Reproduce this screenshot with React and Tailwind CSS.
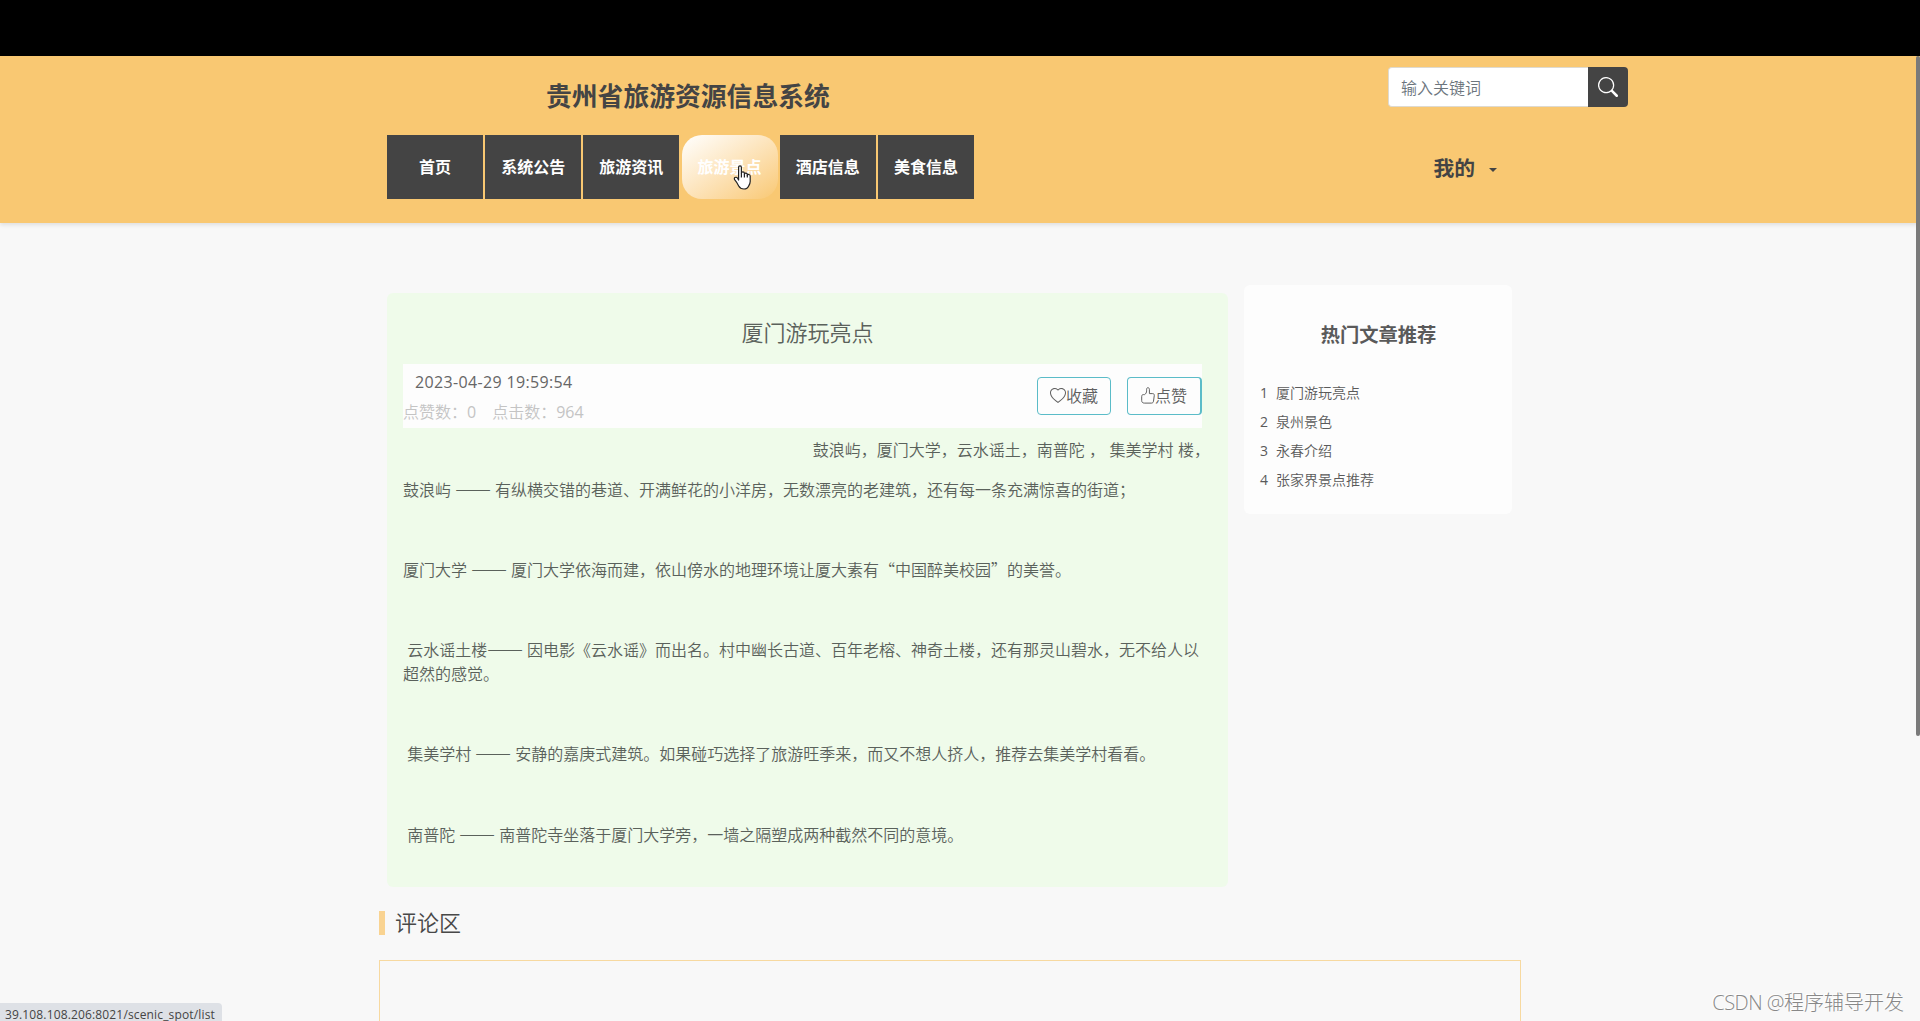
import React, { useState } from 'react';
import { BsSearch, BsHeart } from 'react-icons/bs';

const navItems = ['首页', '系统公告', '旅游资讯', '旅游景点', '酒店信息', '美食信息'];

const hotArticles = ['厦门游玩亮点', '泉州景色', '永春介绍', '张家界景点推荐'];

const Dash = () => <span className="font-['Noto_Sans_CJK_SC',sans-serif] text-[21.5px] leading-[0] font-light">——</span>;

// full-width quotation marks
const Quoted = ({ children }) => (
  <span className="font-['Noto_Sans_CJK_SC',sans-serif] leading-[0]">“{children}”</span>
);

const ThumbIcon = () => (
  <svg width="14" height="17" viewBox="0 0 14 17" fill="none" stroke="currentColor" strokeWidth="1" strokeLinejoin="round">
    <path d="M2.300 7.600h1.300C5 6.800 5.600 5.300 5.600 3.800V2.300C5.600 1.300 6.100.7 6.900.7S8.400 1.300 8.400 2.300v4.300h3.300c1.100 0 1.700.8 1.600 1.700l-.8 5.900c-.2 1.200-.9 1.900-2 1.900H3.300C1.600 16.100.7 15.100.7 13.600V9.700C.7 8.300 1.200 7.600 2.300 7.600z" />
  </svg>
);

const HandCursor = () => (
  <svg className="absolute left-[51px] top-[30px]" width="19" height="25" viewBox="0 0 19 25" fill="#fff" stroke="#222" strokeWidth="1.2" strokeLinejoin="round">
    <path d="M5.600 15V2.400C5.600.3 8.400.3 8.400 2.400V8c.2-1.600 2.900-1.500 3 .2v.8c.3-1.400 2.800-1.200 2.900.4v.8c.4-1.200 2.800-1 2.900.8v5.500c0 1.800-.6 2.800-1.400 4.200-.8 2-2.200 3.300-4.800 3.300-2.700 0-4.200-.9-5.300-3-1-2-1.800-3.600-3.700-5.800-.8-1-.9-2-.1-2.600.9-.7 2-.3 2.700.6z" />
    <path d="M8.400 8v4.500M11.400 9v3.500M14.300 10v2.500" />
  </svg>
);

const Header = () => {
  const [keyword, setKeyword] = useState('');

  return (
    <header className="relative h-[167px] bg-[#f9c872] shadow-[0_2px_4px_rgba(0,0,0,0.1)]">
      <div className="flex justify-between pl-[546px] pr-[292px] pt-[11px]">
        <h1 className="pt-2.5 text-[25.8px] leading-[38px] font-bold text-[#444]">贵州省旅游资源信息系统</h1>
        <form className="flex h-10 w-[240px]" onSubmit={(e) => e.preventDefault()}>
          <input
            value={keyword}
            onChange={(e) => setKeyword(e.target.value)}
            placeholder="输入关键词"
            className="w-[200px] rounded-l border border-r-0 border-[#dedad0] bg-white px-3 pt-0.5 text-base placeholder:text-[#6c757d] focus:outline-none"
          />
          <button className="flex w-10 items-center justify-center rounded-r bg-[#444] text-white">
            <BsSearch size={20} />
          </button>
        </form>
      </div>
      <div className="mt-5 flex items-center justify-between pl-[387px] pr-[423px]">
        <nav className="flex gap-[2.2px]">
          {navItems.map((item) => (
            <a
              key={item}
              className={
                item === '旅游景点'
                  ? 'relative flex h-16 w-24 items-center justify-center rounded-[20px] bg-linear-to-br from-white to-[#f9c872] font-bold text-white'
                  : 'flex h-16 w-24 items-center justify-center bg-[#444] font-bold text-white'
              }
            >
              {item}
              {item === '旅游景点' && <HandCursor />}
            </a>
          ))}
        </nav>
        <div className="flex items-center gap-[14px] pt-[3px] text-[#444]">
          <span className="text-[20.8px] font-bold">我的</span>
          <span className="mt-0.5 border-x-4 border-t-4 border-x-transparent border-t-[#444]" />
        </div>
      </div>
    </header>
  );
};

const Article = () => (
  <article className="mt-2 h-[594px] w-[841px] rounded-md bg-[#effbea] pl-4 pr-[26px] pt-[23px] text-[#5a615b]">
    <h2 className="h-12 pl-2.5 text-center text-[22px] leading-8">厦门游玩亮点</h2>
    <div className="flex h-16 justify-between bg-[#fdfdfd]">
      <div>
        <p className="pl-3 pt-1.5 text-base leading-6 font-normal tracking-[0.35px] text-[#666]">2023-04-29 19:59:54</p>
        <p className="flex gap-4 pt-1.5 leading-6 text-[#c4c4c4]">
          <span>点赞数：<span className="font-normal">0</span></span>
          <span>点击数：<span className="font-normal">964</span></span>
        </p>
      </div>
      <div className="flex items-center gap-4 pb-px text-[#606060]">
        <button className="flex h-[38px] w-[74px] items-center justify-center rounded border border-[#5bbcc8]">
          <BsHeart size={16} />收藏
        </button>
        <button className="flex h-[38px] w-[75px] items-center justify-center rounded border border-r-2 border-[#5bbcc8]">
          <ThumbIcon />点赞
        </button>
      </div>
    </div>
    <div className="pt-2.5 leading-6 *:mb-4 *:h-6">
      <p className="-mr-2 text-right [word-spacing:0.3px]">鼓浪屿，厦门大学，云水谣土，南普陀 ， 集美学村 楼，</p>
      <p>鼓浪屿 <Dash /> 有纵横交错的巷道、开满鲜花的小洋房，无数漂亮的老建筑，还有每一条充满惊喜的街道；</p>
      <p />
      <p>厦门大学 <Dash /> 厦门大学依海而建，依山傍水的地理环境让厦大素有<Quoted>中国醉美校园</Quoted>的美誉。</p>
      <p />
      <p className="h-12!">&nbsp;云水谣土楼<Dash /> 因电影《云水谣》而出名。村中幽长古道、百年老榕、神奇土楼，还有那灵山碧水，无不给人以超然的感觉。</p>
      <p />
      <p>&nbsp;集美学村 <Dash /> 安静的嘉庚式建筑。如果碰巧选择了旅游旺季来，而又不想人挤人，推荐去集美学村看看。</p>
      <p />
      <p className="pt-px">&nbsp;南普陀 <Dash /> 南普陀寺坐落于厦门大学旁，一墙之隔塑成两种截然不同的意境。</p>
    </div>
  </article>
);

const HotList = () => (
  <aside className="h-[229px] w-[268px] rounded-md bg-[#fdfdfd] px-4 pt-[34px] text-[#5a5a5a]">
    <h3 className="mb-[27px] pl-px text-center text-[19.3px] leading-8 font-bold">热门文章推荐</h3>
    <ol>
      {hotArticles.map((title, i) => (
        <li key={title} className="flex h-[29px] items-center text-sm">
          <span className="w-4 font-normal">{i + 1}</span>
          {title}
        </li>
      ))}
    </ol>
  </aside>
);

const App = () => (
  <div className="relative h-[1021px] overflow-hidden bg-[#f8f8f8] font-['Open_Sans','Noto_Sans_CJK_SC',sans-serif] text-base font-[350]">
    <div className="h-14 bg-black" />
    <Header />
    <main>
      <div className="flex items-start gap-4 pl-[387px] pt-[62px]">
        <Article />
        <HotList />
      </div>
      <section className="ml-[379px] w-[1142px] pt-[24px]">
        <div className="flex h-6 items-center">
          <span className="h-6 w-1.5 bg-[#f9d391]" />
          <h2 className="-mt-0.5 pl-2.5 text-[22px] leading-6 text-[#484848]">评论区</h2>
        </div>
        <div className="mt-[25px] h-[200px] border border-[#f7d9a0]" />
      </section>
    </main>

    <div className="absolute right-0 top-14 h-[680px] w-1 rounded bg-[#7a7a7a]" />
    <div className="absolute bottom-0 left-0 h-[18px] w-[222px] rounded-tr bg-[#dee1e6] pl-[5px] text-xs leading-[23px] font-normal tracking-[0.15px] text-[#444]">
      39.108.108.206:8021/scenic_spot/list
    </div>
    <div className="absolute right-4 top-[988px] text-xl leading-[30px] font-light text-[#888] [text-shadow:-1px_-1px_0_#fff]">
      <span className="tracking-[-0.5px]">CSDN @</span>程序辅导开发
    </div>
  </div>
);

export default App;
